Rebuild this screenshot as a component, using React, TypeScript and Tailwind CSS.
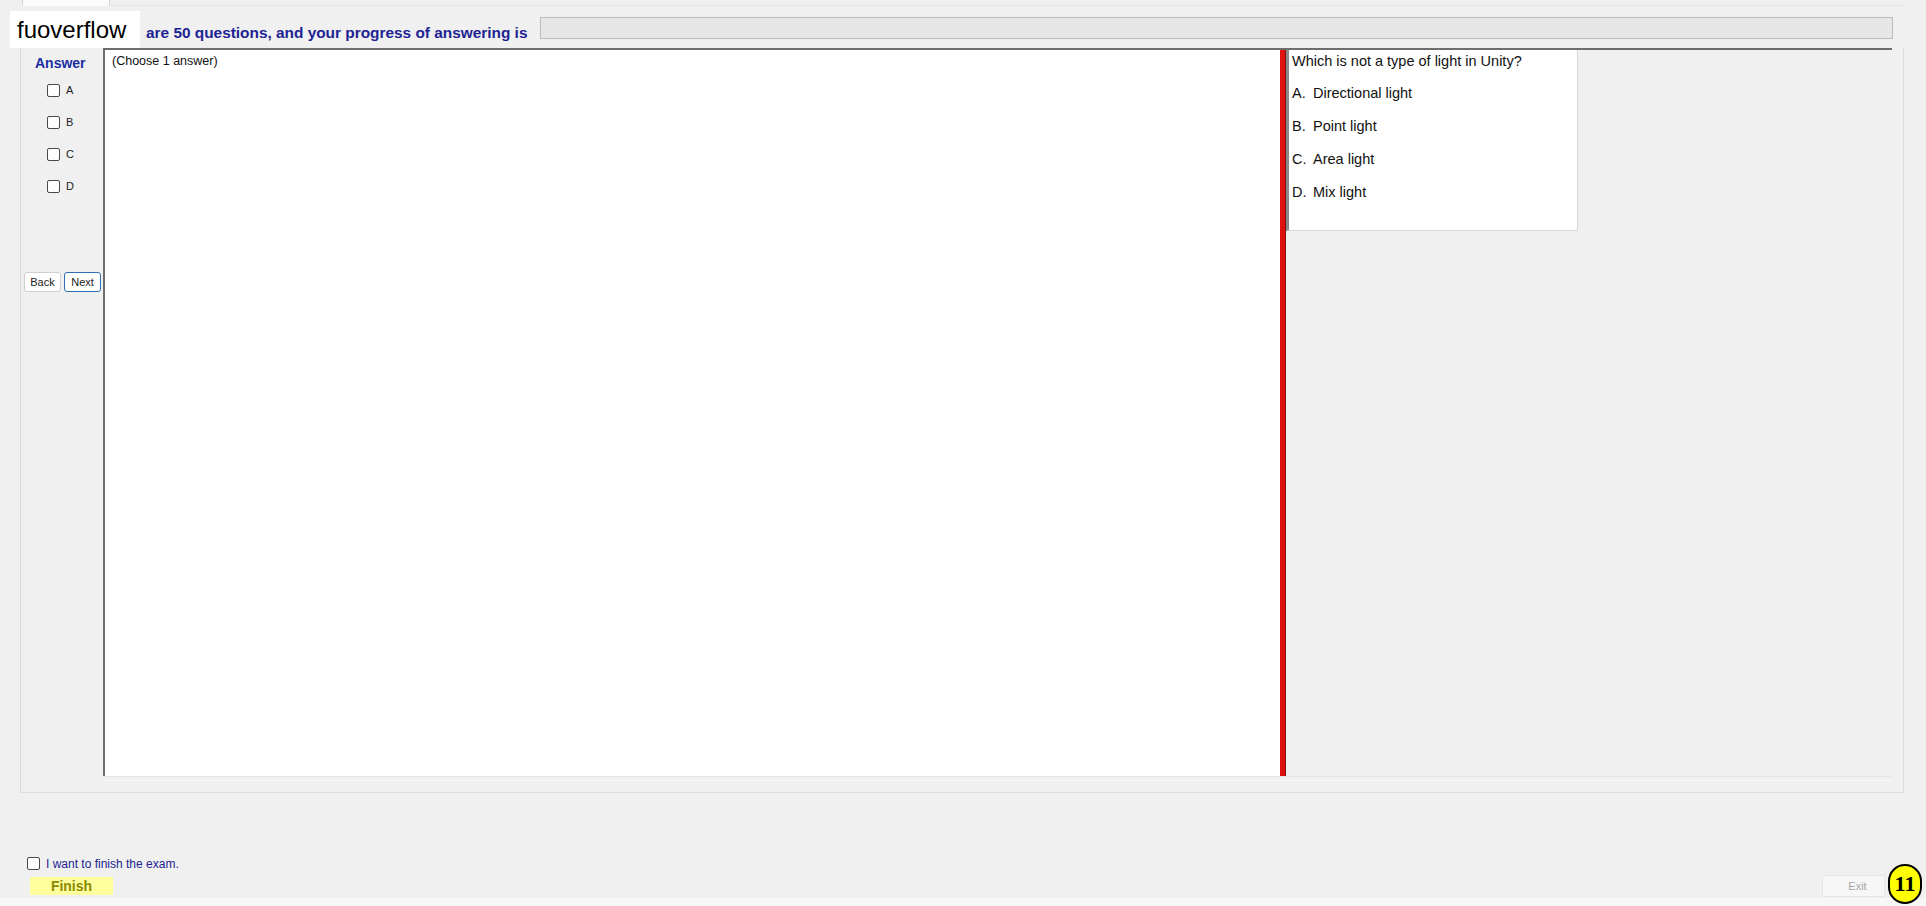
import React from 'react';

const options = [
  { key: 'A', text: 'Directional light' },
  { key: 'B', text: 'Point light' },
  { key: 'C', text: 'Area light' },
  { key: 'D', text: 'Mix light' },
];

function Box() {
  return (
    <input
      type="checkbox"
      className="appearance-none w-[13px] h-[13px] shrink-0 border border-[#4a4a4a] rounded-[2px] bg-white m-0"
    />
  );
}

export default function App() {
  return (
    <div
      className="relative w-[1926px] h-[906px] overflow-hidden bg-[#f0f0f0] text-black"
      style={{ fontFamily: '"Liberation Sans", Arial, sans-serif' }}
    >
      {/* tab strip */}
      <div className="h-[6px] flex">
        <div className="ml-[22px] w-[88px] h-[6px] bg-[#fbfbfb] border-x border-[#d4d4d4]" />
        <div className="flex-1 mr-[21px] border-b border-[#e4e4e4]" />
      </div>

      {/* header */}
      <div className="flex items-start h-[42px]">
        <div className="ml-[10px] mt-[5px] w-[130px] h-[37px] bg-white flex items-center pl-[7px] text-[24px] leading-none">
          fuoverflow
        </div>
        <div className="w-[400px] pl-[6px] mt-[18px] text-[15.4px] leading-[17px] font-bold text-[#1d2393] whitespace-nowrap">
          are 50 questions, and your progress of answering is
        </div>
        <div className="mt-[11px] w-[1353px] h-[22px] bg-[#e6e6e6] border border-[#bcbcbc]" />
      </div>

      {/* body */}
      <div className="flex h-[744px]">
        <div className="w-[20px] shrink-0" />
        <div className="w-[83px] shrink-0 border-l border-[#d9d9d9] flex flex-col">
          <div className="pt-[7px] pl-[14px] text-[14px] leading-[17px] font-bold text-[#1b2ea3]">Answer</div>
          <div className="mt-[12px] flex flex-col gap-[19px] pl-[26px]">
            {options.map((o) => (
              <label key={o.key} className="flex items-center h-[13px] gap-[6px] text-[11px] text-[#222]">
                <Box />
                <span>{o.key}</span>
              </label>
            ))}
          </div>
          <div className="mt-[79px] pl-[3px] flex gap-[3px]">
            <button className="w-[37px] h-[20px] bg-white border border-[#d0d0d0] rounded-[3px] text-[11px] text-[#222] leading-none">
              Back
            </button>
            <button className="w-[37px] h-[20px] bg-white border border-[#2d6fb0] rounded-[3px] text-[11px] text-[#222] leading-none">
              Next
            </button>
          </div>
        </div>

        <div className="w-[1789px] shrink-0 flex flex-col">
          <div className="flex h-[728px] border-t-2 border-[#6d6d6d]">
            <div className="w-[1177px] bg-white border-l-2 border-[#6d6d6d] pl-[7px] pt-[3px] text-[12.5px] leading-[16px] text-[#111]">
              (Choose 1 answer)
            </div>
            <div className="w-[6px] bg-[#e01010] border-r border-[#7a1010]" />
            <div className="flex-1 flex items-start">
              <div className="w-[292px] bg-white border-l-[3px] border-[#8a8a8a] border-r border-b border-r-[#d6d6d6] border-b-[#d6d6d6] pl-[3px] pb-[21px] text-[14.5px] text-[#111]">
                <div className="h-[22px] leading-[22px]">Which is not a type of light in Unity?</div>
                <div className="mt-[5px]">
                  {options.map((o) => (
                    <div key={o.key} className="h-[33px] leading-[33px] flex">
                      <span className="w-[21px]">{o.key}.</span>
                      <span>{o.text}</span>
                    </div>
                  ))}
                </div>
              </div>
            </div>
          </div>
          <div className="h-[16px] border-t border-[#e2e2e2]">
            <div className="mt-[3px] border-t border-[#f7f7f7]" />
          </div>
        </div>
        <div className="w-[12px] shrink-0 border-r border-[#dcdcdc]" />
      </div>
      <div className="ml-[20px] w-[1885px] border-t border-[#dedede]" />

      {/* footer */}
      <div className="mt-[64px] pl-[27px] flex items-center gap-[6px] h-[13px]">
        <Box />
        <span className="text-[12px] text-[#23238f]">I want to finish the exam.</span>
      </div>
      <div className="mt-[5px] flex items-start">
        <button className="ml-[30px] mt-[2px] w-[83px] h-[18px] bg-[#ffff9e] text-[14px] leading-none font-bold text-[#8a8a00]">
          Finish
        </button>
        <button className="ml-auto mr-[41px] w-[63px] h-[22px] pl-[8px] bg-[#f7f7f7] border border-[#e6e6e6] text-[11px] text-[#a6a6a6]">
          Exit
        </button>
      </div>
      <div className="absolute left-0 right-0 bottom-0 h-[8px] bg-[#f7f7f7]" />

      {/* badge */}
      <div
        className="absolute left-[1888px] top-[864px] w-[34px] h-[40px] rounded-full bg-[#ffff00] border-2 border-black flex items-center justify-center text-[22px] font-bold leading-none"
        style={{ fontFamily: '"Liberation Serif", "Times New Roman", serif' }}
      >
        11
      </div>
    </div>
  );
}
